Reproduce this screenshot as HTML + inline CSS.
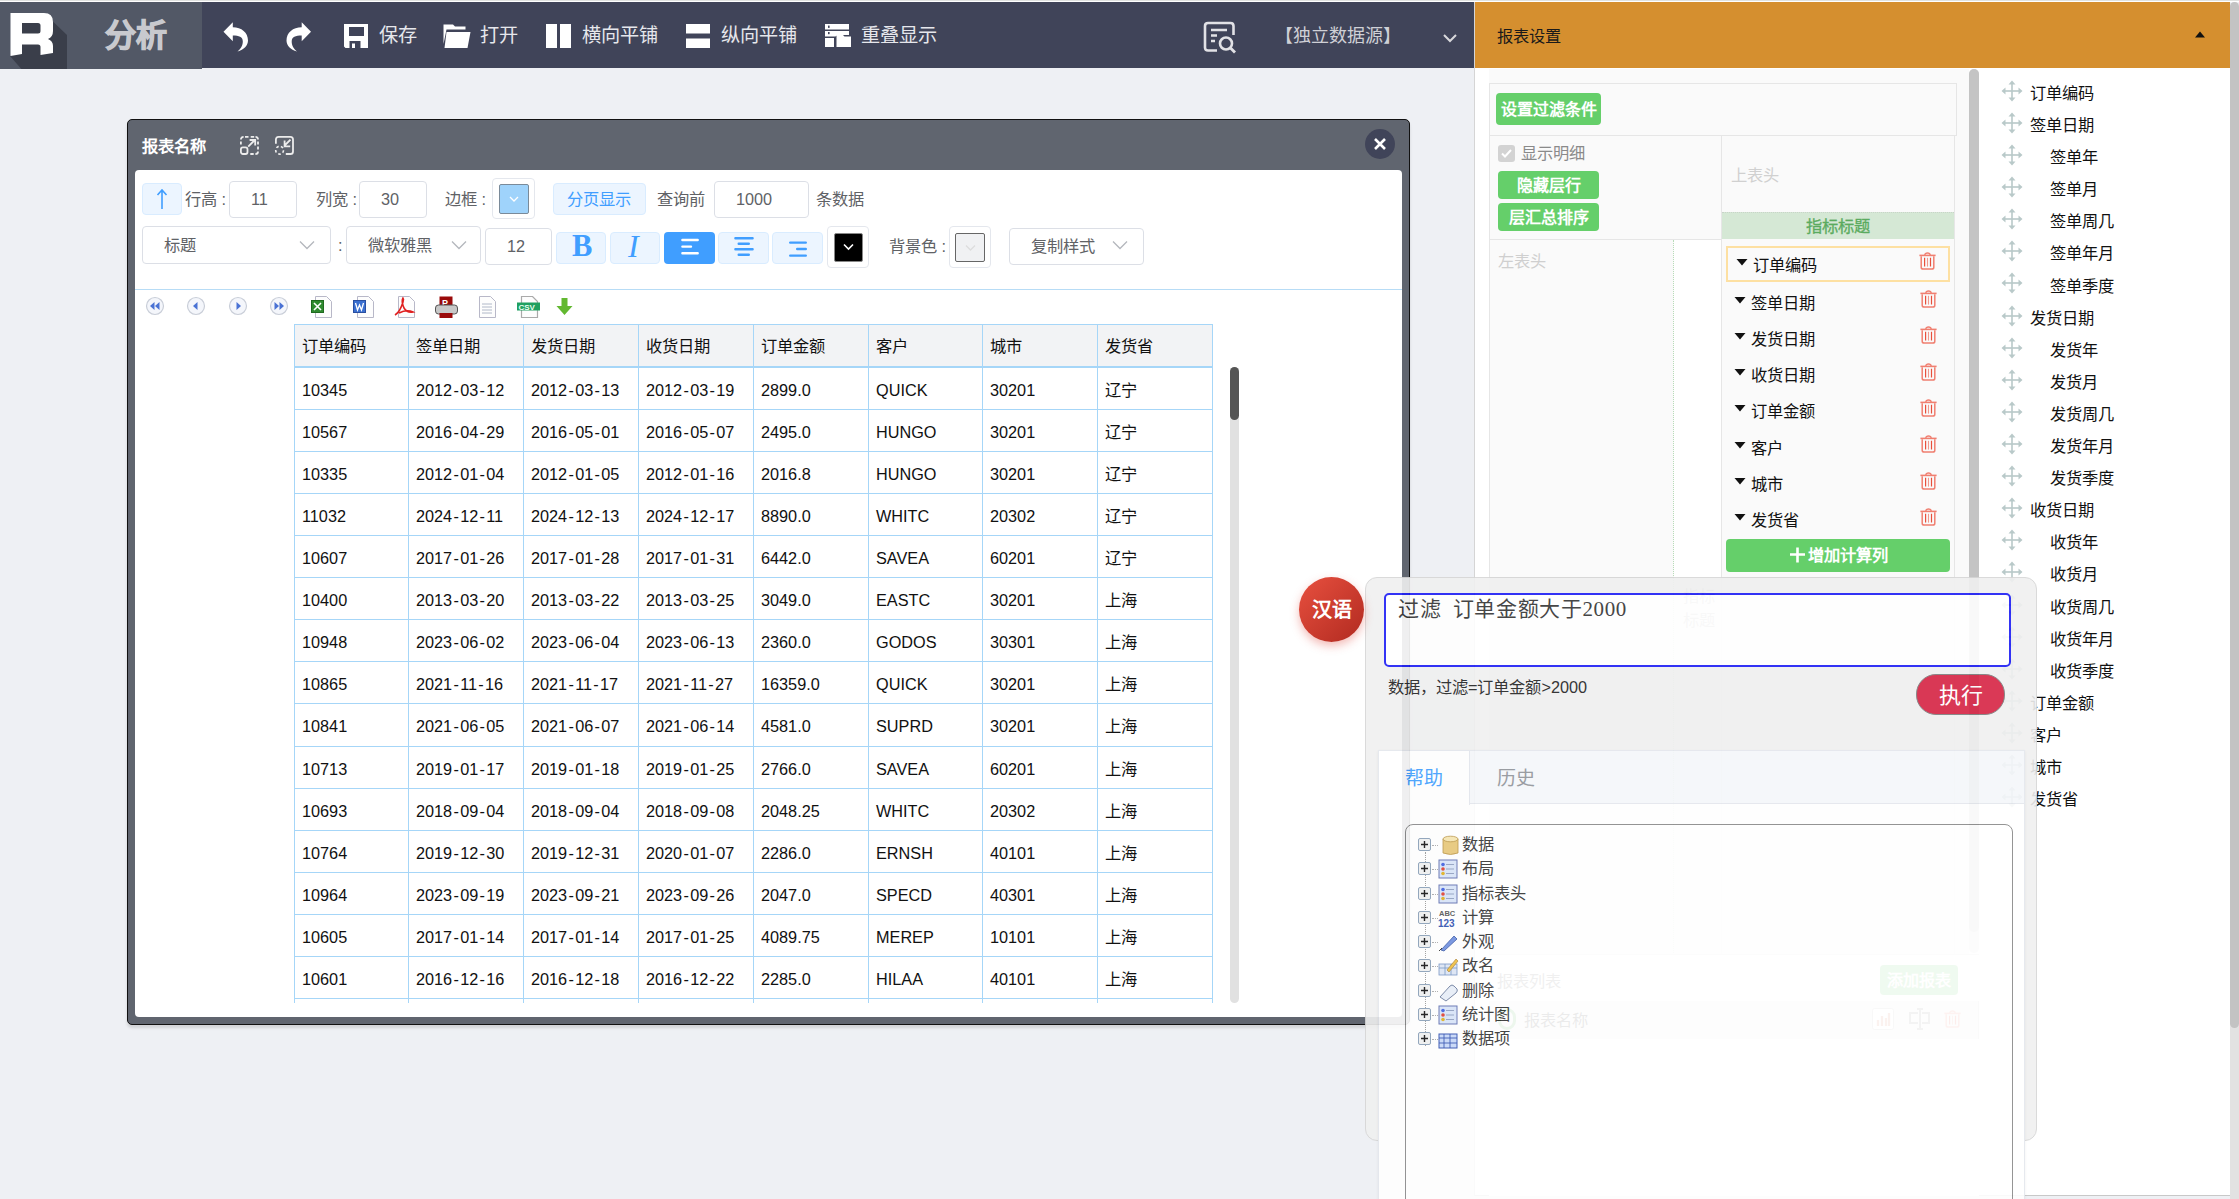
<!DOCTYPE html>
<html lang="zh-CN"><head><meta charset="utf-8">
<style>
*{box-sizing:border-box;margin:0;padding:0}
html,body{width:2239px;height:1199px;overflow:hidden;background:#eef0f4;font-family:"Liberation Sans",sans-serif;color:#222}
.abs{position:absolute}
.t{position:absolute;white-space:nowrap}
#topline{position:absolute;left:0;top:0;width:2239px;height:2px;background:#fff;border-top:1px solid #e0e2e0}
#topbar{position:absolute;left:0;top:2px;width:1474px;height:66px;background:#404459}
#logo{position:absolute;left:0;top:2px;width:202px;height:67px;background:#525866;overflow:hidden}
.tb{position:absolute;top:1px;height:66px;line-height:66px;color:#e6e7ec;font-size:19.2px;white-space:nowrap}
#rp{position:absolute;left:1474px;top:2px;width:756px;height:1194px;background:#fff;border-left:1px solid #d5d5d5;border-bottom:1px solid #c8c8c8;overflow:hidden}
#rphead{position:absolute;left:0;top:0;width:756px;height:66px;background:#d58f2f}
#rscroll{position:absolute;left:2230px;top:2px;width:9px;height:1197px;background:#e2e2e2;border-radius:5px 5px 0 0}
#win{position:absolute;left:127px;top:119px;width:1283px;height:906px;background:#60656f;border:1px solid #111;border-radius:5px;box-shadow:0 3px 3px rgba(0,0,0,.12)}
#winbody{position:absolute;left:7px;top:50px;width:1267px;height:847px;background:#fff;border-radius:4px;overflow:hidden}
.lbl{position:absolute;font-size:16.25px;color:#606266;line-height:20px;white-space:nowrap}
.inp{position:absolute;border:1px solid #dcdfe6;border-radius:4px;background:#fff;font-size:16.25px;color:#606266;line-height:35px;padding-left:21px}
.lbtn{position:absolute;background:#ecf5ff;border:1px solid #d9ecff;border-radius:4px}
#tbl{position:absolute;left:159px;top:154px;width:919px;height:679px;overflow:hidden}
.hl{position:absolute;left:0;width:919px;height:1px;background:#a6d6f8}
.vl{position:absolute;top:0;width:1px;height:679px;background:#a6d6f8}
.cell{position:absolute;font-size:16.25px;color:#111;white-space:nowrap;line-height:20px}
</style></head>
<body>
<div id="topline"></div>
<div id="topbar">
<svg class="abs" style="left:223px;top:19.6px" width="26" height="30" viewBox="0 0 26 30"><path fill="#fff" d="M0.5,9.8 L9.8,0.3 L9.8,5.2 C18.5,5.2 25,10.5 25,18.5 C25,23.5 21,27.5 14.5,29.5 C18.5,26.5 19.8,22.5 19.8,19.5 C19.8,15 16,13.6 9.8,13.6 L9.8,19.3 Z"/></svg>
<svg class="abs" style="left:286px;top:19.6px" width="26" height="30" viewBox="0 0 26 30"><g transform="translate(25.5,0) scale(-1,1)"><path fill="#fff" d="M0.5,9.8 L9.8,0.3 L9.8,5.2 C18.5,5.2 25,10.5 25,18.5 C25,23.5 21,27.5 14.5,29.5 C18.5,26.5 19.8,22.5 19.8,19.5 C19.8,15 16,13.6 9.8,13.6 L9.8,19.3 Z"/></g></svg>
<svg class="abs" style="left:344px;top:22px" width="24" height="24" viewBox="0 0 24 24"><path fill="#fff" fill-rule="evenodd" d="M0,0 H24 V24 H1.5 L0,22.5 Z M5,3 H20 V12 H5 Z M5.5,17 H16.5 V24 H5.5 Z"/><rect x="8" y="19.5" width="3" height="4.5" fill="#fff"/></svg>
<span class="tb" style="left:379px">保存</span>
<svg class="abs" style="left:443px;top:22px" width="28" height="24" viewBox="0 0 28 24"><path fill="#fff" d="M0.5,0.5 H10 L12,2.5 H22.5 V5.5 H3.5 L0.5,20 Z"/><path fill="#fff" d="M3.5,8 H27.5 L24.5,24 H1.5 Z"/></svg>
<span class="tb" style="left:480px">打开</span>
<svg class="abs" style="left:546px;top:22px" width="26" height="24" viewBox="0 0 26 24"><rect x="0" y="0" width="11" height="24" fill="#fff"/><rect x="14" y="0" width="11" height="24" fill="#fff"/></svg>
<span class="tb" style="left:582px">横向平铺</span>
<svg class="abs" style="left:686px;top:22px" width="24" height="24" viewBox="0 0 24 24"><rect x="0" y="0" width="24" height="9.5" fill="#fff"/><rect x="0" y="14.5" width="24" height="9.5" fill="#fff"/></svg>
<span class="tb" style="left:721px">纵向平铺</span>
<svg class="abs" style="left:825px;top:22px" width="26" height="24" viewBox="0 0 26 24"><path fill="#fff" d="M0,0 H24 V5.5 H0 Z M0,7 H24 V11 H12 L10.5,12.5 H0 Z M0,14 H9 V23 H0 Z M11.5,11 H18 L19.5,12.5 H26 V23 H11.5 Z"/><rect x="3" y="1.6" width="1.6" height="2.3" fill="#404459"/><rect x="3" y="8" width="1.6" height="2.2" fill="#404459"/></svg>
<span class="tb" style="left:861px">重叠显示</span>
<svg class="abs" style="left:1203px;top:17.5px" width="36" height="34" viewBox="0 0 36 34"><path fill="none" stroke="#e2e2e6" stroke-width="2.6" d="M14,30.5 H5 Q2,30.5 2,27.5 V6 Q2,3 5,3 H27.5 Q30.5,3 30.5,6 V15"/><path stroke="#e2e2e6" stroke-width="2.4" d="M8,10 H24 M8,15.5 H14 M8,21 H12"/><circle cx="23" cy="23.5" r="6" fill="none" stroke="#e2e2e6" stroke-width="2.6"/><path stroke="#e2e2e6" stroke-width="2.8" d="M27.5,28 L32,32.5"/></svg>
<span class="tb" style="left:1275px;font-size:18px;color:#cfd0d6">【独立数据源】</span>
<svg class="abs" style="left:1443px;top:31px" width="14" height="10" viewBox="0 0 14 10"><path fill="none" stroke="#d8d8dc" stroke-width="2" d="M1,2 L7,8 L13,2"/></svg>
</div>
<div id="logo"><svg class="abs" style="left:0;top:-2px" width="202" height="72" viewBox="0 0 202 72"><path fill="#3a3e4a" d="M44,13 L67,35 L67,72 L24,72 L10,56 Z"/><rect x="20" y="21" width="22" height="14" fill="#3a3e4a"/><path fill="#fff" fill-rule="evenodd" d="M10.5,13 H44 Q53,13 53,22 V31 Q53,37 48,39 Q53,41 53,46 V53 L40.5,55 V47 Q40.5,44.5 38,44.5 H22 V54 L10.5,56 Z M22,23 V33.5 H38 Q40.5,33.5 40.5,31 V25.5 Q40.5,23 38,23 Z"/></svg><span class="abs" style="left:105px;top:14px;font-size:31px;font-weight:bold;color:#c8c9ce;-webkit-text-stroke:1.2px #c8c9ce;line-height:40px">分析</span></div>
<div id="win">
<span class="t" style="left:14px;top:16px;font-size:16.25px;font-weight:bold;color:#fff;line-height:20px">报表名称</span>
<svg class="abs" style="left:111px;top:15px" width="21" height="21" viewBox="0 0 21 21"><g fill="none" stroke="#ececec" stroke-width="1.8"><path d="M1.9,4.6 Q1.9,1.9 4.6,1.9 M6,1.9 H9.5 M11.7,1.9 H15.2 M16.5,1.9 Q19,1.9 19,4.6 M19,6.6 V9.5 M19,11.5 V14.6 M19,16.4 Q19,19 16.4,19 M11.3,19 H14.7 M1.9,6.6 V9.5"/><rect x="1.9" y="12.3" width="6.6" height="6.7" rx="2"/><path d="M9.2,11.6 L15.8,5 M10.6,5 H16.2 V10.6"/></g></svg>
<svg class="abs" style="left:146px;top:15px" width="21" height="21" viewBox="0 0 21 21"><g fill="none" stroke="#ececec" stroke-width="1.8"><path d="M1.9,8.8 V4.6 Q1.9,1.9 4.6,1.9 H16.4 Q19,1.9 19,4.6 V16.4 Q19,19 16.4,19 H11.8"/><circle cx="5.6" cy="15.2" r="3.9" stroke-dasharray="2.6 2.2" stroke-width="1.6"/><path d="M16.5,4.6 L10.6,10.5 M10.6,5.4 V11.3 H16.2"/></g></svg>
<div class="abs" style="left:1237px;top:9px;width:30px;height:30px;border-radius:50%;background:#404459"></div><svg class="abs" style="left:1245px;top:17px" width="14" height="14" viewBox="0 0 14 14"><path d="M2,2 L12,12 M12,2 L2,12" stroke="#fff" stroke-width="2.6"/></svg>
<div id="winbody">
<div class="lbtn" style="left:7px;top:13px;width:40px;height:32px"></div><svg class="abs" style="left:21px;top:18px" width="12" height="22" viewBox="0 0 12 22"><path d="M6,2 V21 M1.5,7 L6,2 L10.5,7" fill="none" stroke="#409eff" stroke-width="1.6"/></svg>
<span class="lbl" style="left:50px;top:19px">行高 :</span><div class="inp" style="left:94px;top:11px;width:68px;height:37px">11</div><span class="lbl" style="left:181px;top:19px">列宽 :</span><div class="inp" style="left:224px;top:11px;width:68px;height:37px">30</div><span class="lbl" style="left:310px;top:19px">边框 :</span><div class="abs" style="left:357px;top:8px;width:43px;height:41px;border:1px solid #e4e7ed;border-radius:4px"></div><div class="abs" style="left:364px;top:14px;width:30px;height:30px;background:#9fd3fb;border:1px solid #7a8a99;border-radius:2px"></div><svg class="abs" style="left:374px;top:25px" width="10" height="8" viewBox="0 0 10 8"><path d="M1,2 L5,6 L9,2" fill="none" stroke="#fff" stroke-width="1.3"/></svg>
<div class="lbtn" style="left:418px;top:13px;width:93px;height:32px"></div><span class="lbl" style="left:432px;top:19px;color:#409eff">分页显示</span>
<span class="lbl" style="left:522px;top:19px">查询前</span><div class="inp" style="left:579px;top:11px;width:95px;height:37px">1000</div><span class="lbl" style="left:681px;top:19px">条数据</span>
<div class="inp" style="left:7px;top:56px;width:189px;height:38px;padding-left:21px;line-height:36px">标题</div><svg class="abs" style="left:164px;top:70px" width="16" height="10" viewBox="0 0 16 10"><path d="M1,1.5 L8,8.5 L15,1.5" fill="none" stroke="#b4b7bd" stroke-width="1.3"/></svg>
<span class="lbl" style="left:203px;top:65px">:</span><div class="inp" style="left:211px;top:56px;width:135px;height:38px;padding-left:21px;line-height:36px">微软雅黑</div><svg class="abs" style="left:316px;top:70px" width="16" height="10" viewBox="0 0 16 10"><path d="M1,1.5 L8,8.5 L15,1.5" fill="none" stroke="#b4b7bd" stroke-width="1.3"/></svg>
<div class="inp" style="left:350px;top:58px;width:67px;height:37px">12</div>
<div class="lbtn" style="left:421px;top:62px;width:50px;height:32px"></div><span class="t" style="left:437px;top:57px;font-family:'Liberation Serif',serif;font-weight:bold;font-size:30.5px;line-height:38px;color:#409eff">B</span>
<div class="lbtn" style="left:475px;top:62px;width:50px;height:32px"></div><span class="t" style="left:493px;top:57px;font-family:'Liberation Serif',serif;font-style:italic;font-size:32px;line-height:38px;color:#409eff">I</span>
<div class="abs" style="left:529px;top:62px;width:51px;height:32px;background:#409eff;border-radius:4px"></div><svg class="abs" style="left:540px;top:64px" width="30" height="26" viewBox="0 0 30 26"><path d="M7.4,6 H22.7 M7.4,12.6 H16 M7.4,19.2 H22.7" stroke="#fff" stroke-width="2.4" stroke-linecap="round"/></svg>
<div class="lbtn" style="left:583px;top:62px;width:51px;height:32px"></div><svg class="abs" style="left:594px;top:64px" width="30" height="26" viewBox="0 0 30 26"><path d="M6.4,4.2 H23.6 M9.7,9.8 H19.8 M6.4,15.3 H23.6 M9.7,20.8 H19.8" stroke="#409eff" stroke-width="2.4" stroke-linecap="round"/></svg>
<div class="lbtn" style="left:637px;top:62px;width:51px;height:32px"></div><svg class="abs" style="left:648px;top:64px" width="30" height="26" viewBox="0 0 30 26"><path d="M7.2,8.6 H22.8 M14.2,15 H22.8 M7.2,21.6 H22.8" stroke="#409eff" stroke-width="2.4" stroke-linecap="round"/></svg>
<div class="abs" style="left:692px;top:56px;width:42px;height:42px;border:1px solid #e4e7ed;border-radius:4px"></div><div class="abs" style="left:699px;top:63px;width:29px;height:29px;background:#000;border:1px solid #888;border-radius:2px"></div><svg class="abs" style="left:708px;top:73px" width="11" height="8" viewBox="0 0 11 8"><path d="M1,1.5 L5.5,6 L10,1.5" fill="none" stroke="#fff" stroke-width="1.6"/></svg>
<span class="lbl" style="left:754px;top:66px">背景色 :</span><div class="abs" style="left:814px;top:56px;width:42px;height:42px;border:1px solid #e4e7ed;border-radius:4px"></div><div class="abs" style="left:820px;top:63px;width:30px;height:29px;background:#f0f1f3;border:1px solid #666;border-radius:2px"></div><svg class="abs" style="left:830px;top:74px" width="11" height="8" viewBox="0 0 11 8"><path d="M1,1.5 L5.5,6 L10,1.5" fill="none" stroke="#ddd" stroke-width="1.3"/></svg>
<div class="inp" style="left:874px;top:58px;width:135px;height:37px;padding-left:21px">复制样式</div><svg class="abs" style="left:977px;top:70px" width="16" height="10" viewBox="0 0 16 10"><path d="M1,1.5 L8,8.5 L15,1.5" fill="none" stroke="#b4b7bd" stroke-width="1.3"/></svg>
<div class="abs" style="left:0;top:119px;width:1267px;height:1px;background:#b7dcf6"></div>
<svg class="abs" style="left:10px;top:126px" width="20" height="20" viewBox="0 0 20 20"><circle cx="10" cy="10" r="8.5" fill="#f4f6fb" stroke="#c9ced8" stroke-width="1.2"/><path d="M9.5,6 L5,10 L9.5,14 Z M14.5,6 L10,10 L14.5,14 Z" fill="#4a72d4"/></svg><svg class="abs" style="left:51px;top:126px" width="20" height="20" viewBox="0 0 20 20"><circle cx="10" cy="10" r="8.5" fill="#f4f6fb" stroke="#c9ced8" stroke-width="1.2"/><path d="M11.5,6 L7,10 L11.5,14 Z" fill="#4a72d4"/></svg><svg class="abs" style="left:93px;top:126px" width="20" height="20" viewBox="0 0 20 20"><circle cx="10" cy="10" r="8.5" fill="#f4f6fb" stroke="#c9ced8" stroke-width="1.2"/><path d="M8.5,6 L13,10 L8.5,14 Z" fill="#4a72d4"/></svg><svg class="abs" style="left:134px;top:126px" width="20" height="20" viewBox="0 0 20 20"><circle cx="10" cy="10" r="8.5" fill="#f4f6fb" stroke="#c9ced8" stroke-width="1.2"/><path d="M5.5,6 L10,10 L5.5,14 Z M10.5,6 L15,10 L10.5,14 Z" fill="#4a72d4"/></svg>
<svg class="abs" style="left:176px;top:126px" width="22" height="23" viewBox="0 0 22 23"><path d="M4.5,0.5 H15.5 L20.5,5.5 V21.5 H4.5 Z" fill="#fdfdfd" stroke="#b8b8c8" stroke-width="1"/><rect x="0.5" y="4.5" width="12" height="12" fill="#2f8a2f" stroke="#1f6a1f"/><path d="M3,7 L10,14 M10,7 L3,14" stroke="#fff" stroke-width="1.6"/></svg><svg class="abs" style="left:218px;top:126px" width="22" height="23" viewBox="0 0 22 23"><path d="M4.5,0.5 H15.5 L20.5,5.5 V21.5 H4.5 Z" fill="#fdfdfd" stroke="#b8b8c8" stroke-width="1"/><rect x="0.5" y="4.5" width="12" height="12" fill="#3a6fd0" stroke="#2a4fa0"/><path d="M2.5,7 L4.5,14 L6.5,9 L8.5,14 L10.5,7" fill="none" stroke="#fff" stroke-width="1.3"/></svg><svg class="abs" style="left:259px;top:126px" width="22" height="23" viewBox="0 0 22 23"><path d="M4.5,0.5 H15.5 L20.5,5.5 V21.5 H4.5 Z" fill="#fdfdfd" stroke="#b8b8c8" stroke-width="1"/><path d="M1,19 Q6,16 9,6 Q10,3 9,2 Q7,5 10,12 Q13,17 19,16 Q13,13 5,17" fill="none" stroke="#e02020" stroke-width="1.6"/></svg><svg class="abs" style="left:300px;top:126px" width="23" height="23" viewBox="0 0 23 23"><rect x="4.5" y="0.5" width="13" height="10" fill="#9a0a0a"/><text x="7" y="9.5" font-size="9" font-weight="bold" fill="#fff" font-family="Liberation Sans">P</text><rect x="0.5" y="9" width="22" height="9" rx="3" fill="#c8c8c8" stroke="#555"/><rect x="4.5" y="17" width="13" height="5" fill="#9a0a0a"/></svg><svg class="abs" style="left:340px;top:126px" width="22" height="23" viewBox="0 0 22 23"><path d="M4.5,0.5 H15.5 L20.5,5.5 V21.5 H4.5 Z" fill="#fdfdfd" stroke="#b8b8c8" stroke-width="1"/><path d="M7,8 H17 M7,11 H17 M7,14 H17 M7,17 H17" stroke="#b0b8c8" stroke-width="1"/></svg><svg class="abs" style="left:382px;top:126px" width="24" height="23" viewBox="0 0 24 23"><path d="M4.5,0.5 H15.5 L20.5,5.5 V21.5 H4.5 Z" fill="#fdfdfd" stroke="#aaa" stroke-width="1.2"/><rect x="0" y="6.5" width="23" height="8" fill="#20a060"/><text x="1.5" y="13.5" font-size="8" font-weight="bold" fill="#e8fff0" font-family="Liberation Sans">CSV</text></svg><svg class="abs" style="left:421px;top:128px" width="17" height="18" viewBox="0 0 17 18"><path d="M5.5,0 H11.5 V8 H16.5 L8.5,17 L0.5,8 H5.5 Z" fill="#62b830"/></svg>
<div id="tbl">
<div class="abs" style="left:0;top:1px;width:919px;height:41px;background:#f2f3f5"></div>
<div class="hl" style="top:0"></div><div class="hl" style="top:42px;height:2px"></div>
<div class="hl" style="top:85px"></div><div class="hl" style="top:127px"></div><div class="hl" style="top:169px"></div><div class="hl" style="top:211px"></div><div class="hl" style="top:253px"></div><div class="hl" style="top:295px"></div><div class="hl" style="top:337px"></div><div class="hl" style="top:379px"></div><div class="hl" style="top:422px"></div><div class="hl" style="top:464px"></div><div class="hl" style="top:506px"></div><div class="hl" style="top:548px"></div><div class="hl" style="top:590px"></div><div class="hl" style="top:632px"></div><div class="hl" style="top:674px"></div>
<div class="vl" style="left:0px"></div><div class="vl" style="left:114px"></div><div class="vl" style="left:229px"></div><div class="vl" style="left:344px"></div><div class="vl" style="left:459px"></div><div class="vl" style="left:574px"></div><div class="vl" style="left:688px"></div><div class="vl" style="left:803px"></div><div class="vl" style="left:918px"></div>
<span class="cell" style="left:8px;top:12px;font-size:16.25px">订单编码</span><span class="cell" style="left:122px;top:12px;font-size:16.25px">签单日期</span><span class="cell" style="left:237px;top:12px;font-size:16.25px">发货日期</span><span class="cell" style="left:352px;top:12px;font-size:16.25px">收货日期</span><span class="cell" style="left:467px;top:12px;font-size:16.25px">订单金额</span><span class="cell" style="left:582px;top:12px;font-size:16.25px">客户</span><span class="cell" style="left:696px;top:12px;font-size:16.25px">城市</span><span class="cell" style="left:811px;top:12px;font-size:16.25px">发货省</span>
<span class="cell" style="left:8px;top:55.5px">10345</span><span class="cell" style="left:122px;top:55.5px">2012<span style="margin:0 1.3px">-</span>03<span style="margin:0 1.3px">-</span>12</span><span class="cell" style="left:237px;top:55.5px">2012<span style="margin:0 1.3px">-</span>03<span style="margin:0 1.3px">-</span>13</span><span class="cell" style="left:352px;top:55.5px">2012<span style="margin:0 1.3px">-</span>03<span style="margin:0 1.3px">-</span>19</span><span class="cell" style="left:467px;top:55.5px">2899.0</span><span class="cell" style="left:582px;top:55.5px">QUICK</span><span class="cell" style="left:696px;top:55.5px">30201</span><span class="cell" style="left:811px;top:55.5px">辽宁</span>
<span class="cell" style="left:8px;top:97.5px">10567</span><span class="cell" style="left:122px;top:97.5px">2016<span style="margin:0 1.3px">-</span>04<span style="margin:0 1.3px">-</span>29</span><span class="cell" style="left:237px;top:97.5px">2016<span style="margin:0 1.3px">-</span>05<span style="margin:0 1.3px">-</span>01</span><span class="cell" style="left:352px;top:97.5px">2016<span style="margin:0 1.3px">-</span>05<span style="margin:0 1.3px">-</span>07</span><span class="cell" style="left:467px;top:97.5px">2495.0</span><span class="cell" style="left:582px;top:97.5px">HUNGO</span><span class="cell" style="left:696px;top:97.5px">30201</span><span class="cell" style="left:811px;top:97.5px">辽宁</span>
<span class="cell" style="left:8px;top:139.5px">10335</span><span class="cell" style="left:122px;top:139.5px">2012<span style="margin:0 1.3px">-</span>01<span style="margin:0 1.3px">-</span>04</span><span class="cell" style="left:237px;top:139.5px">2012<span style="margin:0 1.3px">-</span>01<span style="margin:0 1.3px">-</span>05</span><span class="cell" style="left:352px;top:139.5px">2012<span style="margin:0 1.3px">-</span>01<span style="margin:0 1.3px">-</span>16</span><span class="cell" style="left:467px;top:139.5px">2016.8</span><span class="cell" style="left:582px;top:139.5px">HUNGO</span><span class="cell" style="left:696px;top:139.5px">30201</span><span class="cell" style="left:811px;top:139.5px">辽宁</span>
<span class="cell" style="left:8px;top:181.5px">11032</span><span class="cell" style="left:122px;top:181.5px">2024<span style="margin:0 1.3px">-</span>12<span style="margin:0 1.3px">-</span>11</span><span class="cell" style="left:237px;top:181.5px">2024<span style="margin:0 1.3px">-</span>12<span style="margin:0 1.3px">-</span>13</span><span class="cell" style="left:352px;top:181.5px">2024<span style="margin:0 1.3px">-</span>12<span style="margin:0 1.3px">-</span>17</span><span class="cell" style="left:467px;top:181.5px">8890.0</span><span class="cell" style="left:582px;top:181.5px">WHITC</span><span class="cell" style="left:696px;top:181.5px">20302</span><span class="cell" style="left:811px;top:181.5px">辽宁</span>
<span class="cell" style="left:8px;top:223.5px">10607</span><span class="cell" style="left:122px;top:223.5px">2017<span style="margin:0 1.3px">-</span>01<span style="margin:0 1.3px">-</span>26</span><span class="cell" style="left:237px;top:223.5px">2017<span style="margin:0 1.3px">-</span>01<span style="margin:0 1.3px">-</span>28</span><span class="cell" style="left:352px;top:223.5px">2017<span style="margin:0 1.3px">-</span>01<span style="margin:0 1.3px">-</span>31</span><span class="cell" style="left:467px;top:223.5px">6442.0</span><span class="cell" style="left:582px;top:223.5px">SAVEA</span><span class="cell" style="left:696px;top:223.5px">60201</span><span class="cell" style="left:811px;top:223.5px">辽宁</span>
<span class="cell" style="left:8px;top:265.5px">10400</span><span class="cell" style="left:122px;top:265.5px">2013<span style="margin:0 1.3px">-</span>03<span style="margin:0 1.3px">-</span>20</span><span class="cell" style="left:237px;top:265.5px">2013<span style="margin:0 1.3px">-</span>03<span style="margin:0 1.3px">-</span>22</span><span class="cell" style="left:352px;top:265.5px">2013<span style="margin:0 1.3px">-</span>03<span style="margin:0 1.3px">-</span>25</span><span class="cell" style="left:467px;top:265.5px">3049.0</span><span class="cell" style="left:582px;top:265.5px">EASTC</span><span class="cell" style="left:696px;top:265.5px">30201</span><span class="cell" style="left:811px;top:265.5px">上海</span>
<span class="cell" style="left:8px;top:307.5px">10948</span><span class="cell" style="left:122px;top:307.5px">2023<span style="margin:0 1.3px">-</span>06<span style="margin:0 1.3px">-</span>02</span><span class="cell" style="left:237px;top:307.5px">2023<span style="margin:0 1.3px">-</span>06<span style="margin:0 1.3px">-</span>04</span><span class="cell" style="left:352px;top:307.5px">2023<span style="margin:0 1.3px">-</span>06<span style="margin:0 1.3px">-</span>13</span><span class="cell" style="left:467px;top:307.5px">2360.0</span><span class="cell" style="left:582px;top:307.5px">GODOS</span><span class="cell" style="left:696px;top:307.5px">30301</span><span class="cell" style="left:811px;top:307.5px">上海</span>
<span class="cell" style="left:8px;top:349.5px">10865</span><span class="cell" style="left:122px;top:349.5px">2021<span style="margin:0 1.3px">-</span>11<span style="margin:0 1.3px">-</span>16</span><span class="cell" style="left:237px;top:349.5px">2021<span style="margin:0 1.3px">-</span>11<span style="margin:0 1.3px">-</span>17</span><span class="cell" style="left:352px;top:349.5px">2021<span style="margin:0 1.3px">-</span>11<span style="margin:0 1.3px">-</span>27</span><span class="cell" style="left:467px;top:349.5px">16359.0</span><span class="cell" style="left:582px;top:349.5px">QUICK</span><span class="cell" style="left:696px;top:349.5px">30201</span><span class="cell" style="left:811px;top:349.5px">上海</span>
<span class="cell" style="left:8px;top:392.0px">10841</span><span class="cell" style="left:122px;top:392.0px">2021<span style="margin:0 1.3px">-</span>06<span style="margin:0 1.3px">-</span>05</span><span class="cell" style="left:237px;top:392.0px">2021<span style="margin:0 1.3px">-</span>06<span style="margin:0 1.3px">-</span>07</span><span class="cell" style="left:352px;top:392.0px">2021<span style="margin:0 1.3px">-</span>06<span style="margin:0 1.3px">-</span>14</span><span class="cell" style="left:467px;top:392.0px">4581.0</span><span class="cell" style="left:582px;top:392.0px">SUPRD</span><span class="cell" style="left:696px;top:392.0px">30201</span><span class="cell" style="left:811px;top:392.0px">上海</span>
<span class="cell" style="left:8px;top:434.5px">10713</span><span class="cell" style="left:122px;top:434.5px">2019<span style="margin:0 1.3px">-</span>01<span style="margin:0 1.3px">-</span>17</span><span class="cell" style="left:237px;top:434.5px">2019<span style="margin:0 1.3px">-</span>01<span style="margin:0 1.3px">-</span>18</span><span class="cell" style="left:352px;top:434.5px">2019<span style="margin:0 1.3px">-</span>01<span style="margin:0 1.3px">-</span>25</span><span class="cell" style="left:467px;top:434.5px">2766.0</span><span class="cell" style="left:582px;top:434.5px">SAVEA</span><span class="cell" style="left:696px;top:434.5px">60201</span><span class="cell" style="left:811px;top:434.5px">上海</span>
<span class="cell" style="left:8px;top:476.5px">10693</span><span class="cell" style="left:122px;top:476.5px">2018<span style="margin:0 1.3px">-</span>09<span style="margin:0 1.3px">-</span>04</span><span class="cell" style="left:237px;top:476.5px">2018<span style="margin:0 1.3px">-</span>09<span style="margin:0 1.3px">-</span>04</span><span class="cell" style="left:352px;top:476.5px">2018<span style="margin:0 1.3px">-</span>09<span style="margin:0 1.3px">-</span>08</span><span class="cell" style="left:467px;top:476.5px">2048.25</span><span class="cell" style="left:582px;top:476.5px">WHITC</span><span class="cell" style="left:696px;top:476.5px">20302</span><span class="cell" style="left:811px;top:476.5px">上海</span>
<span class="cell" style="left:8px;top:518.5px">10764</span><span class="cell" style="left:122px;top:518.5px">2019<span style="margin:0 1.3px">-</span>12<span style="margin:0 1.3px">-</span>30</span><span class="cell" style="left:237px;top:518.5px">2019<span style="margin:0 1.3px">-</span>12<span style="margin:0 1.3px">-</span>31</span><span class="cell" style="left:352px;top:518.5px">2020<span style="margin:0 1.3px">-</span>01<span style="margin:0 1.3px">-</span>07</span><span class="cell" style="left:467px;top:518.5px">2286.0</span><span class="cell" style="left:582px;top:518.5px">ERNSH</span><span class="cell" style="left:696px;top:518.5px">40101</span><span class="cell" style="left:811px;top:518.5px">上海</span>
<span class="cell" style="left:8px;top:560.5px">10964</span><span class="cell" style="left:122px;top:560.5px">2023<span style="margin:0 1.3px">-</span>09<span style="margin:0 1.3px">-</span>19</span><span class="cell" style="left:237px;top:560.5px">2023<span style="margin:0 1.3px">-</span>09<span style="margin:0 1.3px">-</span>21</span><span class="cell" style="left:352px;top:560.5px">2023<span style="margin:0 1.3px">-</span>09<span style="margin:0 1.3px">-</span>26</span><span class="cell" style="left:467px;top:560.5px">2047.0</span><span class="cell" style="left:582px;top:560.5px">SPECD</span><span class="cell" style="left:696px;top:560.5px">40301</span><span class="cell" style="left:811px;top:560.5px">上海</span>
<span class="cell" style="left:8px;top:602.5px">10605</span><span class="cell" style="left:122px;top:602.5px">2017<span style="margin:0 1.3px">-</span>01<span style="margin:0 1.3px">-</span>14</span><span class="cell" style="left:237px;top:602.5px">2017<span style="margin:0 1.3px">-</span>01<span style="margin:0 1.3px">-</span>14</span><span class="cell" style="left:352px;top:602.5px">2017<span style="margin:0 1.3px">-</span>01<span style="margin:0 1.3px">-</span>25</span><span class="cell" style="left:467px;top:602.5px">4089.75</span><span class="cell" style="left:582px;top:602.5px">MEREP</span><span class="cell" style="left:696px;top:602.5px">10101</span><span class="cell" style="left:811px;top:602.5px">上海</span>
<span class="cell" style="left:8px;top:644.5px">10601</span><span class="cell" style="left:122px;top:644.5px">2016<span style="margin:0 1.3px">-</span>12<span style="margin:0 1.3px">-</span>16</span><span class="cell" style="left:237px;top:644.5px">2016<span style="margin:0 1.3px">-</span>12<span style="margin:0 1.3px">-</span>18</span><span class="cell" style="left:352px;top:644.5px">2016<span style="margin:0 1.3px">-</span>12<span style="margin:0 1.3px">-</span>22</span><span class="cell" style="left:467px;top:644.5px">2285.0</span><span class="cell" style="left:582px;top:644.5px">HILAA</span><span class="cell" style="left:696px;top:644.5px">40101</span><span class="cell" style="left:811px;top:644.5px">上海</span>
</div>
<div class="abs" style="left:1095px;top:197px;width:9px;height:636px;background:#e1e1e1;border-radius:5px"></div><div class="abs" style="left:1095px;top:197px;width:9px;height:53px;background:#555;border-radius:5px"></div>
</div>
</div>
<div id="rp"></div><div id="rphead" style="position:absolute;left:1475px;top:2px;width:755px"></div><span class="t" style="left:1497px;top:26px;font-size:16.25px;line-height:20px;color:#1a1a1a">报表设置</span><svg class="abs" style="left:2194px;top:30px" width="12" height="8" viewBox="0 0 12 8"><path d="M1,7.5 L6,1.5 L11,7.5 Z" fill="#111"/></svg>
<div id="rscroll"></div><div class="abs" style="left:2230px;top:2px;width:9px;height:1026px;background:#c3c3c3;border-radius:5px"></div>
<div class="abs" style="left:1489px;top:69px;width:480px;height:886px;background:#fafafa"></div>
<div class="abs" style="left:1489px;top:83px;width:468px;height:53px;border:1px solid #e6e6e6;border-right:1px solid #e6e6e6"></div><div class="abs" style="left:1496px;top:93px;width:105px;height:32px;background:#65cf6a;border-radius:4px;color:#fff;font-size:16px;font-weight:bold;line-height:34px;text-align:center;white-space:nowrap">设置过滤条件</div>
<div class="abs" style="left:1489px;top:135px;width:466px;height:443px;border:1px solid #e6e6e6;border-top:1px solid #e6e6e6"></div><div class="abs" style="left:1721px;top:135px;width:1px;height:443px;background:#e6e6e6"></div><div class="abs" style="left:1489px;top:239px;width:233px;height:1px;background:#e6e6e6"></div><div class="abs" style="left:1498px;top:145px;width:17px;height:17px;background:#d3d3d3;border-radius:3px"></div><svg class="abs" style="left:1500px;top:147px" width="13" height="13" viewBox="0 0 13 13"><path d="M2,6.5 L5,9.5 L11,3" fill="none" stroke="#fff" stroke-width="2"/></svg><span class="t" style="left:1521px;top:143px;font-size:16.25px;line-height:20px;color:#8a8a8a">显示明细</span><div class="abs" style="left:1498px;top:171px;width:101px;height:28px;background:#65cf6a;border-radius:4px;color:#fff;font-size:16px;font-weight:bold;line-height:30px;text-align:center;white-space:nowrap">隐藏层行</div><div class="abs" style="left:1498px;top:203px;width:101px;height:28px;background:#65cf6a;border-radius:4px;color:#fff;font-size:16px;font-weight:bold;line-height:30px;text-align:center;white-space:nowrap">层汇总排序</div><span class="t" style="left:1498px;top:251px;font-size:16.25px;line-height:20px;color:#cfcfcf">左表头</span><div class="abs" style="left:1673px;top:240px;width:0;height:338px;border-left:1px dotted #b8dcb8"></div><div class="abs" style="left:1674px;top:240px;width:47px;height:338px;background:#fff"></div><span class="t" style="left:1731px;top:165px;font-size:16.25px;line-height:20px;color:#d0d0d0">上表头</span><div class="abs" style="left:1722px;top:212px;width:232px;height:27px;background:#d5e8d5;border-top:1px dotted #c8d4c8"></div><span class="t" style="left:1806px;top:216px;font-size:16.25px;line-height:20px;color:#5bab5f;-webkit-text-stroke:0.3px #5bab5f">指标标题</span>
<div class="abs" style="left:1726px;top:246px;width:224px;height:36px;border:2px solid #fde0a2"></div><svg class="abs" style="left:1736px;top:258.0px" width="12" height="8" viewBox="0 0 12 8"><path d="M0.5,1 H11.5 L6,7.5 Z" fill="#111"/></svg><span class="t" style="left:1753px;top:255.0px;font-size:16.25px;line-height:20px;color:#111">订单编码</span><svg class="abs" style="left:1919px;top:252px" width="17" height="18" viewBox="0 0 17 18"><g fill="none" stroke="#f07f70"><path d="M0.4,3.4 H16.6" stroke-width="1.6"/><path d="M5.8,3 Q6,1 8.5,1 Q11,1 11.2,3" stroke-width="1.3"/><path d="M2.2,4.2 V15.2 Q2.2,17.1 4.2,17.1 H12.8 Q14.8,17.1 14.8,15.2 V4.2" stroke-width="1.5"/><path d="M5.6,5.8 V14.6 M11.5,5.8 V14.6" stroke-width="1.2" stroke="#e8503c"/><path d="M8.5,5.8 V14.6" stroke-width="1.1" stroke="#f09a8e"/></g></svg><svg class="abs" style="left:1734px;top:295.5px" width="12" height="8" viewBox="0 0 12 8"><path d="M0.5,1 H11.5 L6,7.5 Z" fill="#111"/></svg><span class="t" style="left:1751px;top:292.5px;font-size:16.25px;line-height:20px;color:#111">签单日期</span><svg class="abs" style="left:1920px;top:290px" width="17" height="18" viewBox="0 0 17 18"><g fill="none" stroke="#f07f70"><path d="M0.4,3.4 H16.6" stroke-width="1.6"/><path d="M5.8,3 Q6,1 8.5,1 Q11,1 11.2,3" stroke-width="1.3"/><path d="M2.2,4.2 V15.2 Q2.2,17.1 4.2,17.1 H12.8 Q14.8,17.1 14.8,15.2 V4.2" stroke-width="1.5"/><path d="M5.6,5.8 V14.6 M11.5,5.8 V14.6" stroke-width="1.2" stroke="#e8503c"/><path d="M8.5,5.8 V14.6" stroke-width="1.1" stroke="#f09a8e"/></g></svg><svg class="abs" style="left:1734px;top:331.8px" width="12" height="8" viewBox="0 0 12 8"><path d="M0.5,1 H11.5 L6,7.5 Z" fill="#111"/></svg><span class="t" style="left:1751px;top:328.8px;font-size:16.25px;line-height:20px;color:#111">发货日期</span><svg class="abs" style="left:1920px;top:326px" width="17" height="18" viewBox="0 0 17 18"><g fill="none" stroke="#f07f70"><path d="M0.4,3.4 H16.6" stroke-width="1.6"/><path d="M5.8,3 Q6,1 8.5,1 Q11,1 11.2,3" stroke-width="1.3"/><path d="M2.2,4.2 V15.2 Q2.2,17.1 4.2,17.1 H12.8 Q14.8,17.1 14.8,15.2 V4.2" stroke-width="1.5"/><path d="M5.6,5.8 V14.6 M11.5,5.8 V14.6" stroke-width="1.2" stroke="#e8503c"/><path d="M8.5,5.8 V14.6" stroke-width="1.1" stroke="#f09a8e"/></g></svg><svg class="abs" style="left:1734px;top:368.1px" width="12" height="8" viewBox="0 0 12 8"><path d="M0.5,1 H11.5 L6,7.5 Z" fill="#111"/></svg><span class="t" style="left:1751px;top:365.1px;font-size:16.25px;line-height:20px;color:#111">收货日期</span><svg class="abs" style="left:1920px;top:363px" width="17" height="18" viewBox="0 0 17 18"><g fill="none" stroke="#f07f70"><path d="M0.4,3.4 H16.6" stroke-width="1.6"/><path d="M5.8,3 Q6,1 8.5,1 Q11,1 11.2,3" stroke-width="1.3"/><path d="M2.2,4.2 V15.2 Q2.2,17.1 4.2,17.1 H12.8 Q14.8,17.1 14.8,15.2 V4.2" stroke-width="1.5"/><path d="M5.6,5.8 V14.6 M11.5,5.8 V14.6" stroke-width="1.2" stroke="#e8503c"/><path d="M8.5,5.8 V14.6" stroke-width="1.1" stroke="#f09a8e"/></g></svg><svg class="abs" style="left:1734px;top:404.4px" width="12" height="8" viewBox="0 0 12 8"><path d="M0.5,1 H11.5 L6,7.5 Z" fill="#111"/></svg><span class="t" style="left:1751px;top:401.4px;font-size:16.25px;line-height:20px;color:#111">订单金额</span><svg class="abs" style="left:1920px;top:399px" width="17" height="18" viewBox="0 0 17 18"><g fill="none" stroke="#f07f70"><path d="M0.4,3.4 H16.6" stroke-width="1.6"/><path d="M5.8,3 Q6,1 8.5,1 Q11,1 11.2,3" stroke-width="1.3"/><path d="M2.2,4.2 V15.2 Q2.2,17.1 4.2,17.1 H12.8 Q14.8,17.1 14.8,15.2 V4.2" stroke-width="1.5"/><path d="M5.6,5.8 V14.6 M11.5,5.8 V14.6" stroke-width="1.2" stroke="#e8503c"/><path d="M8.5,5.8 V14.6" stroke-width="1.1" stroke="#f09a8e"/></g></svg><svg class="abs" style="left:1734px;top:440.7px" width="12" height="8" viewBox="0 0 12 8"><path d="M0.5,1 H11.5 L6,7.5 Z" fill="#111"/></svg><span class="t" style="left:1751px;top:437.7px;font-size:16.25px;line-height:20px;color:#111">客户</span><svg class="abs" style="left:1920px;top:435px" width="17" height="18" viewBox="0 0 17 18"><g fill="none" stroke="#f07f70"><path d="M0.4,3.4 H16.6" stroke-width="1.6"/><path d="M5.8,3 Q6,1 8.5,1 Q11,1 11.2,3" stroke-width="1.3"/><path d="M2.2,4.2 V15.2 Q2.2,17.1 4.2,17.1 H12.8 Q14.8,17.1 14.8,15.2 V4.2" stroke-width="1.5"/><path d="M5.6,5.8 V14.6 M11.5,5.8 V14.6" stroke-width="1.2" stroke="#e8503c"/><path d="M8.5,5.8 V14.6" stroke-width="1.1" stroke="#f09a8e"/></g></svg><svg class="abs" style="left:1734px;top:477.0px" width="12" height="8" viewBox="0 0 12 8"><path d="M0.5,1 H11.5 L6,7.5 Z" fill="#111"/></svg><span class="t" style="left:1751px;top:474.0px;font-size:16.25px;line-height:20px;color:#111">城市</span><svg class="abs" style="left:1920px;top:472px" width="17" height="18" viewBox="0 0 17 18"><g fill="none" stroke="#f07f70"><path d="M0.4,3.4 H16.6" stroke-width="1.6"/><path d="M5.8,3 Q6,1 8.5,1 Q11,1 11.2,3" stroke-width="1.3"/><path d="M2.2,4.2 V15.2 Q2.2,17.1 4.2,17.1 H12.8 Q14.8,17.1 14.8,15.2 V4.2" stroke-width="1.5"/><path d="M5.6,5.8 V14.6 M11.5,5.8 V14.6" stroke-width="1.2" stroke="#e8503c"/><path d="M8.5,5.8 V14.6" stroke-width="1.1" stroke="#f09a8e"/></g></svg><svg class="abs" style="left:1734px;top:513.3px" width="12" height="8" viewBox="0 0 12 8"><path d="M0.5,1 H11.5 L6,7.5 Z" fill="#111"/></svg><span class="t" style="left:1751px;top:510.3px;font-size:16.25px;line-height:20px;color:#111">发货省</span><svg class="abs" style="left:1920px;top:508px" width="17" height="18" viewBox="0 0 17 18"><g fill="none" stroke="#f07f70"><path d="M0.4,3.4 H16.6" stroke-width="1.6"/><path d="M5.8,3 Q6,1 8.5,1 Q11,1 11.2,3" stroke-width="1.3"/><path d="M2.2,4.2 V15.2 Q2.2,17.1 4.2,17.1 H12.8 Q14.8,17.1 14.8,15.2 V4.2" stroke-width="1.5"/><path d="M5.6,5.8 V14.6 M11.5,5.8 V14.6" stroke-width="1.2" stroke="#e8503c"/><path d="M8.5,5.8 V14.6" stroke-width="1.1" stroke="#f09a8e"/></g></svg>
<div class="abs" style="left:1726px;top:539px;width:224px;height:33px;background:#65cf6a;border-radius:4px"></div><svg class="abs" style="left:1789px;top:547px" width="17" height="17" viewBox="0 0 17 17"><path d="M8.5,0.5 V15.5 M1,7.5 H16" stroke="#fff" stroke-width="2.6"/></svg><span class="t" style="left:1808px;top:545px;font-size:16.25px;line-height:21px;color:#fff;font-weight:bold">增加计算列</span>
<div class="abs" style="left:1673px;top:578px;width:0;height:377px;border-left:1px dotted #cde5cd"></div><div class="abs" style="left:1721px;top:578px;width:1px;height:377px;background:#eee"></div><div class="abs" style="left:1954px;top:578px;width:1px;height:377px;background:#eee"></div><span class="t" style="left:1683px;top:584px;font-size:16.25px;line-height:24px;color:#bbb;width:32px;white-space:normal">指标标题</span><div class="abs" style="left:1489px;top:954px;width:490px;height:1px;background:#e2e2e2"></div><div class="abs" style="left:1489px;top:955px;width:490px;height:241px;background:#fff"></div><span class="t" style="left:1497px;top:971px;font-size:16.25px;line-height:20px;color:#666">报表列表</span><div class="abs" style="left:1880px;top:965px;width:78px;height:30px;background:#65cf6a;border-radius:4px;color:#fff;font-size:16px;font-weight:bold;line-height:32px;text-align:center;white-space:nowrap">添加报表</div><div class="abs" style="left:1489px;top:1001px;width:490px;height:38px;background:#f0f0f0;border-right:1px solid #ccc"></div><span class="t" style="left:1524px;top:1010px;font-size:16.25px;line-height:20px;color:#333">报表名称</span><div class="abs" style="left:1498px;top:1008px;width:18px;height:22px;border:3px solid #4caf50;border-radius:9px"></div><svg class="abs" style="left:1872px;top:1008px" width="22" height="22" viewBox="0 0 22 22"><rect x="0.5" y="0.5" width="21" height="21" rx="2" fill="#fff" stroke="#bbb"/><path d="M6,18 V12 M10,18 V8 M14,18 V10 M17,18 V5" stroke="#e08060" stroke-width="2.2"/></svg><svg class="abs" style="left:1908px;top:1008px" width="23" height="22" viewBox="0 0 23 22"><path d="M10,5 H2 V15 H10 M14,5 H21 V15 H14 M12,1 V21 M9,1 H15 M9,21 H15" fill="none" stroke="#888" stroke-width="2"/></svg><svg class="abs" style="left:1944px;top:1010px" width="17" height="18" viewBox="0 0 17 18"><g fill="none" stroke="#f07f70"><path d="M0.4,3.4 H16.6" stroke-width="1.6"/><path d="M5.8,3 Q6,1 8.5,1 Q11,1 11.2,3" stroke-width="1.3"/><path d="M2.2,4.2 V15.2 Q2.2,17.1 4.2,17.1 H12.8 Q14.8,17.1 14.8,15.2 V4.2" stroke-width="1.5"/><path d="M5.6,5.8 V14.6 M11.5,5.8 V14.6" stroke-width="1.2" stroke="#e8503c"/><path d="M8.5,5.8 V14.6" stroke-width="1.1" stroke="#f09a8e"/></g></svg><div class="abs" style="left:1969px;top:69px;width:10px;height:884px;background:#e6e6e6;border-radius:5px"></div><div class="abs" style="left:1969px;top:69px;width:10px;height:863px;background:#c4c4c4;border-radius:5px"></div>
<svg class="abs" style="left:2001px;top:80px" width="22" height="22" viewBox="0 0 22 22"><g fill="#b9c9c9"><path d="M11,0.5 L14.5,4.5 H7.5 Z M11,21.5 L14.5,17.5 H7.5 Z M0.5,11 L4.5,7.5 V14.5 Z M21.5,11 L17.5,7.5 V14.5 Z"/><rect x="10.2" y="3" width="1.6" height="16"/><rect x="3" y="10.2" width="16" height="1.6"/></g></svg><span class="t" style="left:2030px;top:82.9px;font-size:16.25px;line-height:20px;color:#111">订单编码</span><svg class="abs" style="left:2001px;top:112px" width="22" height="22" viewBox="0 0 22 22"><g fill="#b9c9c9"><path d="M11,0.5 L14.5,4.5 H7.5 Z M11,21.5 L14.5,17.5 H7.5 Z M0.5,11 L4.5,7.5 V14.5 Z M21.5,11 L17.5,7.5 V14.5 Z"/><rect x="10.2" y="3" width="1.6" height="16"/><rect x="3" y="10.2" width="16" height="1.6"/></g></svg><span class="t" style="left:2030px;top:115.0px;font-size:16.25px;line-height:20px;color:#111">签单日期</span><svg class="abs" style="left:2001px;top:144px" width="22" height="22" viewBox="0 0 22 22"><g fill="#b9c9c9"><path d="M11,0.5 L14.5,4.5 H7.5 Z M11,21.5 L14.5,17.5 H7.5 Z M0.5,11 L4.5,7.5 V14.5 Z M21.5,11 L17.5,7.5 V14.5 Z"/><rect x="10.2" y="3" width="1.6" height="16"/><rect x="3" y="10.2" width="16" height="1.6"/></g></svg><span class="t" style="left:2050px;top:147.1px;font-size:16.25px;line-height:20px;color:#111">签单年</span><svg class="abs" style="left:2001px;top:176px" width="22" height="22" viewBox="0 0 22 22"><g fill="#b9c9c9"><path d="M11,0.5 L14.5,4.5 H7.5 Z M11,21.5 L14.5,17.5 H7.5 Z M0.5,11 L4.5,7.5 V14.5 Z M21.5,11 L17.5,7.5 V14.5 Z"/><rect x="10.2" y="3" width="1.6" height="16"/><rect x="3" y="10.2" width="16" height="1.6"/></g></svg><span class="t" style="left:2050px;top:179.2px;font-size:16.25px;line-height:20px;color:#111">签单月</span><svg class="abs" style="left:2001px;top:208px" width="22" height="22" viewBox="0 0 22 22"><g fill="#b9c9c9"><path d="M11,0.5 L14.5,4.5 H7.5 Z M11,21.5 L14.5,17.5 H7.5 Z M0.5,11 L4.5,7.5 V14.5 Z M21.5,11 L17.5,7.5 V14.5 Z"/><rect x="10.2" y="3" width="1.6" height="16"/><rect x="3" y="10.2" width="16" height="1.6"/></g></svg><span class="t" style="left:2050px;top:211.3px;font-size:16.25px;line-height:20px;color:#111">签单周几</span><svg class="abs" style="left:2001px;top:240px" width="22" height="22" viewBox="0 0 22 22"><g fill="#b9c9c9"><path d="M11,0.5 L14.5,4.5 H7.5 Z M11,21.5 L14.5,17.5 H7.5 Z M0.5,11 L4.5,7.5 V14.5 Z M21.5,11 L17.5,7.5 V14.5 Z"/><rect x="10.2" y="3" width="1.6" height="16"/><rect x="3" y="10.2" width="16" height="1.6"/></g></svg><span class="t" style="left:2050px;top:243.4px;font-size:16.25px;line-height:20px;color:#111">签单年月</span><svg class="abs" style="left:2001px;top:272px" width="22" height="22" viewBox="0 0 22 22"><g fill="#b9c9c9"><path d="M11,0.5 L14.5,4.5 H7.5 Z M11,21.5 L14.5,17.5 H7.5 Z M0.5,11 L4.5,7.5 V14.5 Z M21.5,11 L17.5,7.5 V14.5 Z"/><rect x="10.2" y="3" width="1.6" height="16"/><rect x="3" y="10.2" width="16" height="1.6"/></g></svg><span class="t" style="left:2050px;top:275.5px;font-size:16.25px;line-height:20px;color:#111">签单季度</span><svg class="abs" style="left:2001px;top:305px" width="22" height="22" viewBox="0 0 22 22"><g fill="#b9c9c9"><path d="M11,0.5 L14.5,4.5 H7.5 Z M11,21.5 L14.5,17.5 H7.5 Z M0.5,11 L4.5,7.5 V14.5 Z M21.5,11 L17.5,7.5 V14.5 Z"/><rect x="10.2" y="3" width="1.6" height="16"/><rect x="3" y="10.2" width="16" height="1.6"/></g></svg><span class="t" style="left:2030px;top:307.6px;font-size:16.25px;line-height:20px;color:#111">发货日期</span><svg class="abs" style="left:2001px;top:337px" width="22" height="22" viewBox="0 0 22 22"><g fill="#b9c9c9"><path d="M11,0.5 L14.5,4.5 H7.5 Z M11,21.5 L14.5,17.5 H7.5 Z M0.5,11 L4.5,7.5 V14.5 Z M21.5,11 L17.5,7.5 V14.5 Z"/><rect x="10.2" y="3" width="1.6" height="16"/><rect x="3" y="10.2" width="16" height="1.6"/></g></svg><span class="t" style="left:2050px;top:339.7px;font-size:16.25px;line-height:20px;color:#111">发货年</span><svg class="abs" style="left:2001px;top:369px" width="22" height="22" viewBox="0 0 22 22"><g fill="#b9c9c9"><path d="M11,0.5 L14.5,4.5 H7.5 Z M11,21.5 L14.5,17.5 H7.5 Z M0.5,11 L4.5,7.5 V14.5 Z M21.5,11 L17.5,7.5 V14.5 Z"/><rect x="10.2" y="3" width="1.6" height="16"/><rect x="3" y="10.2" width="16" height="1.6"/></g></svg><span class="t" style="left:2050px;top:371.8px;font-size:16.25px;line-height:20px;color:#111">发货月</span><svg class="abs" style="left:2001px;top:401px" width="22" height="22" viewBox="0 0 22 22"><g fill="#b9c9c9"><path d="M11,0.5 L14.5,4.5 H7.5 Z M11,21.5 L14.5,17.5 H7.5 Z M0.5,11 L4.5,7.5 V14.5 Z M21.5,11 L17.5,7.5 V14.5 Z"/><rect x="10.2" y="3" width="1.6" height="16"/><rect x="3" y="10.2" width="16" height="1.6"/></g></svg><span class="t" style="left:2050px;top:403.9px;font-size:16.25px;line-height:20px;color:#111">发货周几</span><svg class="abs" style="left:2001px;top:433px" width="22" height="22" viewBox="0 0 22 22"><g fill="#b9c9c9"><path d="M11,0.5 L14.5,4.5 H7.5 Z M11,21.5 L14.5,17.5 H7.5 Z M0.5,11 L4.5,7.5 V14.5 Z M21.5,11 L17.5,7.5 V14.5 Z"/><rect x="10.2" y="3" width="1.6" height="16"/><rect x="3" y="10.2" width="16" height="1.6"/></g></svg><span class="t" style="left:2050px;top:436.0px;font-size:16.25px;line-height:20px;color:#111">发货年月</span><svg class="abs" style="left:2001px;top:465px" width="22" height="22" viewBox="0 0 22 22"><g fill="#b9c9c9"><path d="M11,0.5 L14.5,4.5 H7.5 Z M11,21.5 L14.5,17.5 H7.5 Z M0.5,11 L4.5,7.5 V14.5 Z M21.5,11 L17.5,7.5 V14.5 Z"/><rect x="10.2" y="3" width="1.6" height="16"/><rect x="3" y="10.2" width="16" height="1.6"/></g></svg><span class="t" style="left:2050px;top:468.1px;font-size:16.25px;line-height:20px;color:#111">发货季度</span><svg class="abs" style="left:2001px;top:497px" width="22" height="22" viewBox="0 0 22 22"><g fill="#b9c9c9"><path d="M11,0.5 L14.5,4.5 H7.5 Z M11,21.5 L14.5,17.5 H7.5 Z M0.5,11 L4.5,7.5 V14.5 Z M21.5,11 L17.5,7.5 V14.5 Z"/><rect x="10.2" y="3" width="1.6" height="16"/><rect x="3" y="10.2" width="16" height="1.6"/></g></svg><span class="t" style="left:2030px;top:500.2px;font-size:16.25px;line-height:20px;color:#111">收货日期</span><svg class="abs" style="left:2001px;top:529px" width="22" height="22" viewBox="0 0 22 22"><g fill="#b9c9c9"><path d="M11,0.5 L14.5,4.5 H7.5 Z M11,21.5 L14.5,17.5 H7.5 Z M0.5,11 L4.5,7.5 V14.5 Z M21.5,11 L17.5,7.5 V14.5 Z"/><rect x="10.2" y="3" width="1.6" height="16"/><rect x="3" y="10.2" width="16" height="1.6"/></g></svg><span class="t" style="left:2050px;top:532.3px;font-size:16.25px;line-height:20px;color:#111">收货年</span><svg class="abs" style="left:2001px;top:561px" width="22" height="22" viewBox="0 0 22 22"><g fill="#b9c9c9"><path d="M11,0.5 L14.5,4.5 H7.5 Z M11,21.5 L14.5,17.5 H7.5 Z M0.5,11 L4.5,7.5 V14.5 Z M21.5,11 L17.5,7.5 V14.5 Z"/><rect x="10.2" y="3" width="1.6" height="16"/><rect x="3" y="10.2" width="16" height="1.6"/></g></svg><span class="t" style="left:2050px;top:564.4px;font-size:16.25px;line-height:20px;color:#111">收货月</span><svg class="abs" style="left:2001px;top:594px" width="22" height="22" viewBox="0 0 22 22"><g fill="#b9c9c9"><path d="M11,0.5 L14.5,4.5 H7.5 Z M11,21.5 L14.5,17.5 H7.5 Z M0.5,11 L4.5,7.5 V14.5 Z M21.5,11 L17.5,7.5 V14.5 Z"/><rect x="10.2" y="3" width="1.6" height="16"/><rect x="3" y="10.2" width="16" height="1.6"/></g></svg><span class="t" style="left:2050px;top:596.5px;font-size:16.25px;line-height:20px;color:#111">收货周几</span><svg class="abs" style="left:2001px;top:626px" width="22" height="22" viewBox="0 0 22 22"><g fill="#b9c9c9"><path d="M11,0.5 L14.5,4.5 H7.5 Z M11,21.5 L14.5,17.5 H7.5 Z M0.5,11 L4.5,7.5 V14.5 Z M21.5,11 L17.5,7.5 V14.5 Z"/><rect x="10.2" y="3" width="1.6" height="16"/><rect x="3" y="10.2" width="16" height="1.6"/></g></svg><span class="t" style="left:2050px;top:628.6px;font-size:16.25px;line-height:20px;color:#111">收货年月</span><svg class="abs" style="left:2001px;top:658px" width="22" height="22" viewBox="0 0 22 22"><g fill="#b9c9c9"><path d="M11,0.5 L14.5,4.5 H7.5 Z M11,21.5 L14.5,17.5 H7.5 Z M0.5,11 L4.5,7.5 V14.5 Z M21.5,11 L17.5,7.5 V14.5 Z"/><rect x="10.2" y="3" width="1.6" height="16"/><rect x="3" y="10.2" width="16" height="1.6"/></g></svg><span class="t" style="left:2050px;top:660.7px;font-size:16.25px;line-height:20px;color:#111">收货季度</span><svg class="abs" style="left:2001px;top:690px" width="22" height="22" viewBox="0 0 22 22"><g fill="#b9c9c9"><path d="M11,0.5 L14.5,4.5 H7.5 Z M11,21.5 L14.5,17.5 H7.5 Z M0.5,11 L4.5,7.5 V14.5 Z M21.5,11 L17.5,7.5 V14.5 Z"/><rect x="10.2" y="3" width="1.6" height="16"/><rect x="3" y="10.2" width="16" height="1.6"/></g></svg><span class="t" style="left:2030px;top:692.8px;font-size:16.25px;line-height:20px;color:#111">订单金额</span><svg class="abs" style="left:2001px;top:722px" width="22" height="22" viewBox="0 0 22 22"><g fill="#b9c9c9"><path d="M11,0.5 L14.5,4.5 H7.5 Z M11,21.5 L14.5,17.5 H7.5 Z M0.5,11 L4.5,7.5 V14.5 Z M21.5,11 L17.5,7.5 V14.5 Z"/><rect x="10.2" y="3" width="1.6" height="16"/><rect x="3" y="10.2" width="16" height="1.6"/></g></svg><span class="t" style="left:2030px;top:724.9px;font-size:16.25px;line-height:20px;color:#111">客户</span><svg class="abs" style="left:2001px;top:754px" width="22" height="22" viewBox="0 0 22 22"><g fill="#b9c9c9"><path d="M11,0.5 L14.5,4.5 H7.5 Z M11,21.5 L14.5,17.5 H7.5 Z M0.5,11 L4.5,7.5 V14.5 Z M21.5,11 L17.5,7.5 V14.5 Z"/><rect x="10.2" y="3" width="1.6" height="16"/><rect x="3" y="10.2" width="16" height="1.6"/></g></svg><span class="t" style="left:2030px;top:757.0px;font-size:16.25px;line-height:20px;color:#111">城市</span><svg class="abs" style="left:2001px;top:786px" width="22" height="22" viewBox="0 0 22 22"><g fill="#b9c9c9"><path d="M11,0.5 L14.5,4.5 H7.5 Z M11,21.5 L14.5,17.5 H7.5 Z M0.5,11 L4.5,7.5 V14.5 Z M21.5,11 L17.5,7.5 V14.5 Z"/><rect x="10.2" y="3" width="1.6" height="16"/><rect x="3" y="10.2" width="16" height="1.6"/></g></svg><span class="t" style="left:2030px;top:789.1px;font-size:16.25px;line-height:20px;color:#111">发货省</span>
<div class="abs" style="left:1365px;top:577px;width:672px;height:564px;opacity:0.9"><div class="abs" style="left:0;top:0;width:672px;height:564px;background:#f0f0f0;border:1px solid #d6d6d6;border-radius:12px"></div><div class="abs" style="left:19px;top:16px;width:627px;height:74px;background:#fff;border:2px solid #1d1df5;border-radius:5px"></div><span class="t" style="left:33px;top:19px;font-family:'Liberation Serif',serif;font-size:21px;letter-spacing:0.6px;line-height:26px;color:#333">过滤&nbsp;&nbsp;订单金额大于2000</span><span class="t" style="left:23px;top:100px;font-size:16.25px;line-height:20px;color:#222">数据，过滤=订单金额&gt;2000</span><div class="abs" style="left:551px;top:97px;width:89px;height:41px;background:#d62444;border:1px solid #7d7d7d;border-radius:20px;color:#fff;font-size:22px;line-height:41px;text-align:center">执行</div><div class="abs" style="left:13px;top:173px;width:647px;height:460px;background:#fff;border:1px solid #e4e7ed;box-shadow:0 1px 3px rgba(0,0,0,.06)"><div class="abs" style="left:0;top:0;width:645px;height:53px;background:#f5f7fa;border-bottom:1px solid #e4e7ed"></div><div class="abs" style="left:0;top:0;width:91px;height:54px;background:#fff;border-right:1px solid #e4e7ed"></div><span class="t" style="left:26px;top:17px;font-size:19px;line-height:22px;color:#409eff">帮助</span><span class="t" style="left:118px;top:17px;font-size:19px;line-height:22px;color:#909399">历史</span><div class="abs" style="left:26px;top:73px;width:608px;height:400px;border:1px solid #8a8a8a;border-radius:8px;background:#fff"></div><div class="abs" style="left:45.5px;top:101px;width:0;height:194px;border-left:1px dotted #9a9a9a"></div><div class="abs" style="left:53px;top:94.0px;width:6px;height:0;border-top:1px dotted #aaa"></div><svg class="abs" style="left:39px;top:87.0px" width="14" height="14" viewBox="0 0 14 14"><rect x="0.5" y="0.5" width="12" height="12" rx="1.5" fill="#f0f0f0" stroke="#8aa0b8"/><path d="M3,6.5 H10 M6.5,3 V10" stroke="#111" stroke-width="1.4"/></svg><svg class="abs" style="left:59px;top:84.0px" width="21" height="21" viewBox="0 0 21 21"><path d="M5,4 V18 Q12.5,21 20,18 V4" fill="#e8c878" stroke="#b89040" stroke-width="0.8"/><ellipse cx="12.5" cy="4" rx="7.5" ry="2.8" fill="#f6e6b0" stroke="#b89040" stroke-width="0.8"/></svg><span class="t" style="left:83px;top:83.0px;font-size:16.25px;line-height:20px;color:#333">数据</span><div class="abs" style="left:53px;top:118.2px;width:6px;height:0;border-top:1px dotted #aaa"></div><svg class="abs" style="left:39px;top:111.2px" width="14" height="14" viewBox="0 0 14 14"><rect x="0.5" y="0.5" width="12" height="12" rx="1.5" fill="#f0f0f0" stroke="#8aa0b8"/><path d="M3,6.5 H10 M6.5,3 V10" stroke="#111" stroke-width="1.4"/></svg><svg class="abs" style="left:59px;top:108.2px" width="21" height="21" viewBox="0 0 21 21"><rect x="1" y="1" width="18" height="18" fill="#d8e4f8" stroke="#6070b0"/><circle cx="5" cy="5.5" r="1.8" fill="#4060e0"/><circle cx="5" cy="10" r="1.8" fill="#e04030"/><circle cx="5" cy="14.5" r="1.8" fill="#e0b020"/><path d="M8,5.5 H16 M8,10 H16 M8,14.5 H16" stroke="#90a0c0"/></svg><span class="t" style="left:83px;top:107.2px;font-size:16.25px;line-height:20px;color:#333">布局</span><div class="abs" style="left:53px;top:142.5px;width:6px;height:0;border-top:1px dotted #aaa"></div><svg class="abs" style="left:39px;top:135.5px" width="14" height="14" viewBox="0 0 14 14"><rect x="0.5" y="0.5" width="12" height="12" rx="1.5" fill="#f0f0f0" stroke="#8aa0b8"/><path d="M3,6.5 H10 M6.5,3 V10" stroke="#111" stroke-width="1.4"/></svg><svg class="abs" style="left:59px;top:132.5px" width="21" height="21" viewBox="0 0 21 21"><rect x="1" y="1" width="18" height="18" fill="#d8e4f8" stroke="#6070b0"/><circle cx="5" cy="5.5" r="1.8" fill="#4060e0"/><circle cx="5" cy="10" r="1.8" fill="#e04030"/><circle cx="5" cy="14.5" r="1.8" fill="#e0b020"/><path d="M8,5.5 H16 M8,10 H16 M8,14.5 H16" stroke="#90a0c0"/></svg><span class="t" style="left:83px;top:131.5px;font-size:16.25px;line-height:20px;color:#333">指标表头</span><div class="abs" style="left:53px;top:166.8px;width:6px;height:0;border-top:1px dotted #aaa"></div><svg class="abs" style="left:39px;top:159.8px" width="14" height="14" viewBox="0 0 14 14"><rect x="0.5" y="0.5" width="12" height="12" rx="1.5" fill="#f0f0f0" stroke="#8aa0b8"/><path d="M3,6.5 H10 M6.5,3 V10" stroke="#111" stroke-width="1.4"/></svg><svg class="abs" style="left:59px;top:156.8px" width="21" height="21" viewBox="0 0 21 21"><text x="1" y="8" font-size="7.5" font-weight="bold" fill="#555" font-family="Liberation Sans">ABC</text><text x="0" y="19" font-size="10" font-weight="bold" fill="#3050b0" font-family="Liberation Sans">123</text></svg><span class="t" style="left:83px;top:155.8px;font-size:16.25px;line-height:20px;color:#333">计算</span><div class="abs" style="left:53px;top:191.0px;width:6px;height:0;border-top:1px dotted #aaa"></div><svg class="abs" style="left:39px;top:184.0px" width="14" height="14" viewBox="0 0 14 14"><rect x="0.5" y="0.5" width="12" height="12" rx="1.5" fill="#f0f0f0" stroke="#8aa0b8"/><path d="M3,6.5 H10 M6.5,3 V10" stroke="#111" stroke-width="1.4"/></svg><svg class="abs" style="left:59px;top:181.0px" width="21" height="21" viewBox="0 0 21 21"><path d="M3,18 L16,4 L19,7 L6,19 Z" fill="#7090e0" stroke="#3050a0" stroke-width="0.8"/><path d="M1,19 L4,16" stroke="#333"/></svg><span class="t" style="left:83px;top:180.0px;font-size:16.25px;line-height:20px;color:#333">外观</span><div class="abs" style="left:53px;top:215.2px;width:6px;height:0;border-top:1px dotted #aaa"></div><svg class="abs" style="left:39px;top:208.2px" width="14" height="14" viewBox="0 0 14 14"><rect x="0.5" y="0.5" width="12" height="12" rx="1.5" fill="#f0f0f0" stroke="#8aa0b8"/><path d="M3,6.5 H10 M6.5,3 V10" stroke="#111" stroke-width="1.4"/></svg><svg class="abs" style="left:59px;top:205.2px" width="21" height="21" viewBox="0 0 21 21"><rect x="1" y="8" width="18" height="11" fill="#dde6f5" stroke="#7090c0" stroke-width="0.8"/><path d="M1,12 H19 M7,8 V19 M13,8 V19" stroke="#7090c0" stroke-width="0.8"/><path d="M9,14 L18,3 L20,5 L11,16 Z" fill="#f0c040" stroke="#a07020" stroke-width="0.6"/></svg><span class="t" style="left:83px;top:204.2px;font-size:16.25px;line-height:20px;color:#333">改名</span><div class="abs" style="left:53px;top:239.5px;width:6px;height:0;border-top:1px dotted #aaa"></div><svg class="abs" style="left:39px;top:232.5px" width="14" height="14" viewBox="0 0 14 14"><rect x="0.5" y="0.5" width="12" height="12" rx="1.5" fill="#f0f0f0" stroke="#8aa0b8"/><path d="M3,6.5 H10 M6.5,3 V10" stroke="#111" stroke-width="1.4"/></svg><svg class="abs" style="left:59px;top:229.5px" width="21" height="21" viewBox="0 0 21 21"><path d="M2,16 L12,5 Q14,3 16,5 L19,8 Q20,10 18,12 L8,20 Z" fill="#e8eef8" stroke="#7080a0"/></svg><span class="t" style="left:83px;top:228.5px;font-size:16.25px;line-height:20px;color:#333">删除</span><div class="abs" style="left:53px;top:263.8px;width:6px;height:0;border-top:1px dotted #aaa"></div><svg class="abs" style="left:39px;top:256.8px" width="14" height="14" viewBox="0 0 14 14"><rect x="0.5" y="0.5" width="12" height="12" rx="1.5" fill="#f0f0f0" stroke="#8aa0b8"/><path d="M3,6.5 H10 M6.5,3 V10" stroke="#111" stroke-width="1.4"/></svg><svg class="abs" style="left:59px;top:253.8px" width="21" height="21" viewBox="0 0 21 21"><rect x="1" y="1" width="18" height="18" fill="#d8e4f8" stroke="#6070b0"/><circle cx="5" cy="5.5" r="1.8" fill="#4060e0"/><circle cx="5" cy="10" r="1.8" fill="#e04030"/><circle cx="5" cy="14.5" r="1.8" fill="#e0b020"/><path d="M8,5.5 H16 M8,10 H16 M8,14.5 H16" stroke="#90a0c0"/></svg><span class="t" style="left:83px;top:252.8px;font-size:16.25px;line-height:20px;color:#333">统计图</span><div class="abs" style="left:53px;top:288.0px;width:6px;height:0;border-top:1px dotted #aaa"></div><svg class="abs" style="left:39px;top:281.0px" width="14" height="14" viewBox="0 0 14 14"><rect x="0.5" y="0.5" width="12" height="12" rx="1.5" fill="#f0f0f0" stroke="#8aa0b8"/><path d="M3,6.5 H10 M6.5,3 V10" stroke="#111" stroke-width="1.4"/></svg><svg class="abs" style="left:59px;top:278.0px" width="21" height="21" viewBox="0 0 21 21"><rect x="1" y="5" width="18" height="14" fill="#c8d8f8" stroke="#3050b0"/><path d="M1,9 H19 M1,14 H19 M6,5 V19 M12,5 V19" stroke="#3050b0" stroke-width="0.9"/></svg><span class="t" style="left:83px;top:277.0px;font-size:16.25px;line-height:20px;color:#333">数据项</span></div></div>
<div class="abs" style="left:1299px;top:577px;width:65px;height:65px;border-radius:50%;background:linear-gradient(135deg,#e8503f,#b12a20);box-shadow:0 4px 10px rgba(220,60,50,.35);color:#fff;font-size:20px;font-weight:bold;line-height:67px;text-align:center">汉语</div>
</body></html>
